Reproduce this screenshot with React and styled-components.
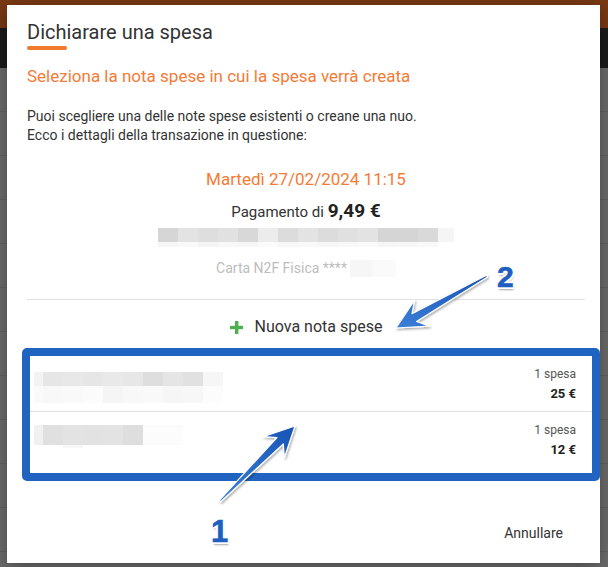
import React from "react";
import styled, { createGlobalStyle } from "styled-components";

const GlobalStyle = createGlobalStyle`
  html, body {
    margin: 0;
    padding: 0;
    background: #6c6c6c;
  }
  * {
    box-sizing: border-box;
  }
`;

const Page = styled.div`
  position: relative;
  width: 608px;
  height: 567px;
  overflow: hidden;
  font-family: Roboto, "Liberation Sans", sans-serif;
  background: #6c6c6c;
`;

const TopBar = styled.div`
  height: 28px;
  background: #7a3913;
`;

const NavBar = styled.div`
  height: 40px;
  background: #1b1b1b;
`;

const BackRow = styled.div`
  height: 44px;
  border-bottom: 1px solid #626262;
`;

const Dialog = styled.div`
  position: absolute;
  top: 5px;
  left: 7px;
  width: 593px;
  height: 558px;
  background: #fff;
  box-shadow: 0 4px 18px rgba(0, 0, 0, 0.35);
  padding: 15px 15px 0 20px;
  display: flex;
  flex-direction: column;
`;

const Title = styled.h2`
  margin: 0;
  font-size: 20px;
  font-weight: 400;
  line-height: 24px;
  color: #333;
`;

const TitleMark = styled.div`
  width: 40px;
  height: 4px;
  margin-top: 2px;
  border-radius: 2px;
  background: #f07a2a;
`;

const Subtitle = styled.h3`
  margin: 15px 0 0;
  font-size: 17px;
  font-weight: 400;
  line-height: 22px;
  color: #f47b36;
`;

const Intro = styled.p`
  margin: 20px 0 0;
  font-size: 14px;
  line-height: 19px;
  color: #333;
`;

const Details = styled.div`
  display: flex;
  flex-direction: column;
  align-items: center;
`;

const DateLine = styled.div`
  margin-top: 23px;
  font-size: 17px;
  line-height: 22px;
  color: #f47b36;
`;

const Payment = styled.div`
  margin-top: 9px;
  font-size: 15px;
  line-height: 24px;
  color: #333;
`;

const Amount = styled.span`
  font-size: 19px;
  font-weight: 700;
  color: #222;
`;

const Pixelated = styled.div`
  display: flex;
  flex-direction: column;
  margin-top: ${(p) => p.$top || 0}px;
`;

const PixelRow = styled.div`
  display: flex;
  height: ${(p) => p.$h}px;
`;

const Cell = styled.div`
  height: 100%;
  width: ${(p) => p.$w}px;
  background: ${(p) => p.$c};
`;

const CardLine = styled.div`
  margin-top: 12px;
  display: flex;
  align-items: center;
  gap: 3px;
  font-size: 14px;
  line-height: 18px;
  color: #bdbdbd;
`;

const Divider = styled.div`
  margin-top: 22px;
  height: 1px;
  background: #e0e0e0;
`;

const NewNote = styled.button`
  margin: 15px auto 0;
  display: flex;
  align-items: center;
  gap: 12px;
  padding: 0;
  border: none;
  background: none;
  font-family: inherit;
  font-size: 16px;
  line-height: 24px;
  color: #333;
  cursor: pointer;
`;

const ListFrame = styled.div`
  margin: 9px -15px 0 -5px;
  border: 8px solid #2163c0;
  border-radius: 5px;
  padding-bottom: 5px;
`;

const NoteRow = styled.div`
  display: flex;
  justify-content: space-between;
  padding: 10px 16px 8px 4px;
  height: 56px;
  border-bottom: ${(p) => (p.$last ? "none" : "1px solid #e0e0e0")};
`;

const NoteMeta = styled.div`
  display: flex;
  flex-direction: column;
  align-items: flex-end;
`;

const Count = styled.span`
  font-size: 12px;
  line-height: 16px;
  color: #555;
`;

const Total = styled.span`
  margin-top: 2px;
  font-size: 13px;
  line-height: 20px;
  font-weight: 700;
  color: #222;
`;

const Footer = styled.div`
  display: flex;
  justify-content: flex-end;
  margin-top: 42px;
`;

const CancelButton = styled.button`
  margin-right: 22px;
  padding: 0;
  border: none;
  background: none;
  font-family: inherit;
  font-size: 14px;
  line-height: 20px;
  color: #333;
  cursor: pointer;
`;

const Annotations = styled.svg`
  position: absolute;
  top: 0;
  left: 0;
  pointer-events: none;
`;

const Badge = styled.span`
  position: absolute;
  top: ${(p) => p.$y}px;
  left: ${(p) => p.$x}px;
  font-family: "Liberation Sans", Arial, sans-serif;
  font-weight: 700;
  font-size: ${(p) => p.$size}px;
  line-height: 1;
  color: #1f5fbf;
  -webkit-text-stroke: 0.6px #1f5fbf;
  text-shadow: 2px 0 0 #fff, -2px 0 0 #fff, 0 2px 0 #fff, 0 -2px 0 #fff,
    1.5px 1.5px 0 #fff, -1.5px -1.5px 0 #fff, 1.5px -1.5px 0 #fff,
    -1.5px 1.5px 0 #fff, 1px 3px 2px rgba(0, 0, 0, 0.35);
`;

const Blur = ({ rows, top }) => (
  <Pixelated $top={top}>
    {rows.map((r, i) => (
      <PixelRow key={i} $h={r.h}>
        {r.cells.map(([w, c], j) => (
          <Cell key={j} $w={w} $c={c} />
        ))}
      </PixelRow>
    ))}
  </Pixelated>
);

const merchantBlur = [
  {
    h: 14,
    cells: [
      [20, "#d6d6d6"], [20, "#e3e3e3"], [20, "#dedede"], [20, "#e1e1e1"], [20, "#d8d8d8"],
      [20, "#ececec"], [20, "#dcdcdc"], [20, "#e3e3e3"], [20, "#dcdcdc"], [20, "#e0e0e0"],
      [20, "#e3e3e3"], [20, "#d5d5d5"], [20, "#d5d5d5"], [20, "#d9d9d9"], [16, "#f5f5f5"],
    ],
  },
  {
    h: 5,
    cells: [
      [20, "#f6f6f6"], [20, "#f9f9f9"], [20, "#f4f4f4"], [20, "#f8f8f8"], [20, "#f6f6f6"],
      [20, "#fbfbfb"], [20, "#f7f7f7"], [20, "#f9f9f9"], [20, "#f6f6f6"], [20, "#f8f8f8"],
      [20, "#fafafa"], [20, "#f5f5f5"], [20, "#f6f6f6"], [20, "#f9f9f9"], [16, "#fff"],
    ],
  },
];

const cardBlur = [
  { h: 17, cells: [[22, "#f6f6f6"], [24, "#fafafa"]] },
];

const notes = [
  {
    id: 1,
    count: "1 spesa",
    total: "25 €",
    blur: {
      top: 6,
      rows: [
        {
          h: 14,
          cells: [
            [9, "#f3f3f3"], [20, "#e6e6e6"], [20, "#e8e8e8"], [20, "#e6e6e6"], [20, "#e9e9e9"],
            [20, "#e7e7e7"], [20, "#dedede"], [20, "#e5e5e5"], [20, "#e1e1e1"], [20, "#f6f6f6"],
          ],
        },
        {
          h: 18,
          cells: [
            [9, "#fafafa"], [20, "#f8f8f8"], [20, "#f9f9f9"], [20, "#fbfbfb"], [20, "#f5f5f5"],
            [20, "#f8f8f8"], [20, "#f9f9f9"], [20, "#f6f6f6"], [20, "#f7f7f7"], [20, "#fcfcfc"],
          ],
        },
      ],
    },
  },
  {
    id: 2,
    count: "1 spesa",
    total: "12 €",
    blur: {
      top: 3,
      rows: [
        {
          h: 20,
          cells: [
            [9, "#f1f1f1"], [20, "#e0e0e0"], [20, "#e3e3e3"], [20, "#e2e2e2"], [20, "#e3e3e3"],
            [20, "#dedede"], [40, "#fcfcfc"],
          ],
        },
        { h: 3, cells: [[29, "#fff"], [20, "#f7f7f7"]] },
      ],
    },
  },
];

// tapered arrow with a barbed head, from tail t to tip p
const arrowPoints = (t, p, headLen, headHalf, tailW, shaftW) => {
  const dx = p[0] - t[0];
  const dy = p[1] - t[1];
  const len = Math.hypot(dx, dy);
  const d = [dx / len, dy / len];
  const n = [-d[1], d[0]];
  const at = (base, along, side) => [
    base[0] + d[0] * along + n[0] * side,
    base[1] + d[1] * along + n[1] * side,
  ];
  const pts = [
    at(t, 0, tailW / 2),
    at(p, -headLen * 0.7, shaftW / 2),
    at(p, -headLen, headHalf),
    p,
    at(p, -headLen, -headHalf),
    at(p, -headLen * 0.7, -shaftW / 2),
    at(t, 0, -tailW / 2),
  ];
  return pts.map((q) => q.map((v) => v.toFixed(1)).join(",")).join(" ");
};

const Arrow = ({ from, to }) => (
  <polygon
    points={arrowPoints(from, to, 30, 15, 2, 9)}
    fill="url(#arrowFill)"
    stroke="#fff"
    strokeWidth="1.2"
    strokeLinejoin="round"
    filter="url(#arrowShadow)"
  />
);

const PlusIcon = () => (
  <svg width="13" height="13" viewBox="0 0 13 13">
    <rect x="5" y="0" width="3.4" height="13" fill="#4caf50" />
    <rect x="0" y="4.8" width="13" height="3.4" fill="#4caf50" />
  </svg>
);

const App = () => (
  <Page>
    <GlobalStyle />
    <TopBar />
    <NavBar />
    {Array.from({ length: 11 }).map((_, i) => (
      <BackRow key={i} />
    ))}

    <Dialog>
      <Title>Dichiarare una spesa</Title>
      <TitleMark />
      <Subtitle>Seleziona la nota spese in cui la spesa verrà creata</Subtitle>
      <Intro>
        Puoi scegliere una delle note spese esistenti o creane una nuo.
        <br />
        Ecco i dettagli della transazione in questione:
      </Intro>

      <Details>
        <DateLine>Martedì 27/02/2024 11:15</DateLine>
        <Payment>
          Pagamento di <Amount>9,49 €</Amount>
        </Payment>
        <Blur rows={merchantBlur} top={4} />
        <CardLine>
          Carta N2F Fisica ****
          <Blur rows={cardBlur} />
        </CardLine>
      </Details>

      <Divider />
      <NewNote>
        <PlusIcon />
        Nuova nota spese
      </NewNote>

      <ListFrame>
        {notes.map((note, i) => (
          <NoteRow key={note.id} $last={i === notes.length - 1}>
            <Blur rows={note.blur.rows} top={note.blur.top} />
            <NoteMeta>
              <Count>{note.count}</Count>
              <Total>{note.total}</Total>
            </NoteMeta>
          </NoteRow>
        ))}
      </ListFrame>

      <Footer>
        <CancelButton>Annullare</CancelButton>
      </Footer>
    </Dialog>

    <Annotations width="608" height="567" viewBox="0 0 608 567">
      <defs>
        <linearGradient id="arrowFill" x1="0" y1="1" x2="1" y2="0">
          <stop offset="0" stopColor="#3b7fd8" />
          <stop offset="1" stopColor="#1753b4" />
        </linearGradient>
        <filter id="arrowShadow" x="-20%" y="-20%" width="140%" height="140%">
          <feDropShadow dx="1" dy="1.5" stdDeviation="1" floodColor="#000" floodOpacity="0.35" />
        </filter>
      </defs>
      <Arrow from={[220, 501]} to={[295, 426]} />
      <Arrow from={[487, 276]} to={[396, 328]} />
    </Annotations>
    <Badge $x={497} $y={262} $size={30}>2</Badge>
    <Badge $x={211} $y={516} $size={31}>1</Badge>
  </Page>
);

export default App;
